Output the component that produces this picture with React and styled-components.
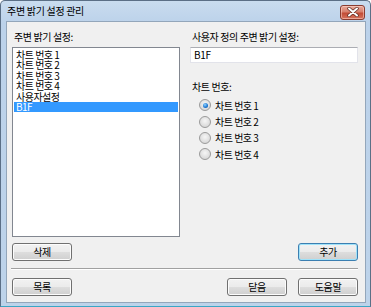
import React from "react";
import styled, { createGlobalStyle } from "styled-components";

const Global = createGlobalStyle`
  html, body { margin: 0; padding: 0; background: #ffffff; }
  body { font-family: "Noto Sans CJK KR", "Noto Sans", sans-serif; }
  * { box-sizing: border-box; }
`;

const Frame = styled.div`
  width: 371px;
  height: 307px;
  display: flex;
  flex-direction: column;
  border: 1px solid #5b6f86;
  border-bottom-color: #3aa6c5;
  border-radius: 5px 5px 0 0;
  background: linear-gradient(180deg, #c9dcef 0px, #bcd2ea 22px, #bdd3ea 100%);
`;

const TitleBar = styled.div`
  height: 20px;
  display: flex;
  align-items: center;
  justify-content: space-between;
  padding: 0 5px 0 6px;
  flex: none;
`;

const Title = styled.span`
  font-size: 10px;
  letter-spacing: -0.3px;
  color: #000;
  line-height: 12px;
`;

const CloseBtn = styled.div`
  width: 25px;
  height: 15px;
  margin-top: 2px;
  border: 1px solid #8a3c30;
  border-radius: 3px;
  background: linear-gradient(180deg, #e9a99a 0%, #d8806d 45%, #c24c36 55%, #d7735d 100%);
  box-shadow: inset 0 0 0 1px rgba(255, 220, 210, 0.5);
  display: flex;
  align-items: center;
  justify-content: center;
`;

const Client = styled.div`
  flex: 1;
  margin: 0 4px 3px 5px;
  border: 1px solid #93a6ba;
  background: #f0f0f0;
  padding: 9px 7px 6px 5px;
  display: flex;
  flex-direction: column;
`;

const Columns = styled.div`
  display: grid;
  grid-template-columns: 168px 168px;
  column-gap: 10px;
`;

const Column = styled.div`
  display: flex;
  flex-direction: column;
`;

const Label = styled.div`
  font-size: 10px;
  letter-spacing: -0.4px;
  line-height: 12px;
  height: 12px;
  color: #000;
  margin-left: 2px;
  margin-bottom: 4px;
  margin-top: ${(p) => p.$top || 0}px;
`;

const ListBox = styled.div`
  height: 190px;
  background: #fff;
  border: 1px solid #828790;
  padding: 2px 1px;
`;

const ListItem = styled.div`
  font-size: 10px;
  letter-spacing: -0.5px;
  line-height: 10.4px;
  height: 10.4px;
  padding-left: 2px;
  color: ${(p) => (p.$selected ? "#fff" : "#000")};
  background: ${(p) => (p.$selected ? "#3399ff" : "transparent")};
`;

const TextBox = styled.div`
  height: 16px;
  background: #fff;
  border: 1px solid #e2e3ea;
  border-top-color: #abadb3;
  font-size: 10px;
  letter-spacing: -0.3px;
  line-height: 14px;
  padding-left: 3px;
  color: #000;
`;

const RadioGroup = styled.div`
  display: flex;
  flex-direction: column;
  margin-left: 9px;
`;

const RadioRow = styled.div`
  display: flex;
  align-items: center;
  height: 16.4px;
  gap: 4px;
  font-size: 10px;
  letter-spacing: -0.5px;
  color: #000;
`;

const RadioCircle = styled.span`
  width: 12px;
  height: 12px;
  border-radius: 50%;
  border: 1px solid #9a9a9a;
  background: radial-gradient(circle at 50% 40%, #f6f6f6 0%, #e0e0e0 55%, #cfcfcf 100%);
  display: flex;
  align-items: center;
  justify-content: center;
  flex: none;
`;

const RadioDot = styled.span`
  width: 5px;
  height: 5px;
  border-radius: 50%;
  background: radial-gradient(circle at 40% 35%, #8fd3ff 0%, #1b74d0 60%, #0d4f9a 100%);
`;

const ButtonRow = styled.div`
  display: flex;
  justify-content: space-between;
  align-items: center;
  margin-top: ${(p) => p.$top || 0}px;
`;

const ButtonGroup = styled.div`
  display: flex;
  gap: 11px;
`;

const Button = styled.div`
  width: 60px;
  height: 18px;
  border: 1px solid ${(p) => (p.$default ? "#3c7fb1" : "#707070")};
  border-radius: 3px;
  background: linear-gradient(180deg, #f2f2f2 0%, #ebebeb 48%, #dddddd 52%, #cfcfcf 100%);
  box-shadow: inset 0 0 0 1px ${(p) => (p.$default ? "#9fe2f9" : "#fcfcfc")};
  display: flex;
  align-items: center;
  justify-content: center;
  font-size: 10px;
  letter-spacing: -0.4px;
  color: #000;
  line-height: 12px;
`;

const Separator = styled.div`
  height: 2px;
  margin: 7px 0 8px -1px;
  border-top: 1px solid #a0a0a0;
  border-bottom: 1px solid #ffffff;
`;

const items = ["차트 번호 1", "차트 번호 2", "차트 번호 3", "차트 번호 4", "사용자설정", "B1F"];
const radios = ["차트 번호 1", "차트 번호 2", "차트 번호 3", "차트 번호 4"];

export default function App() {
  return (
    <>
      <Global />
      <Frame>
        <TitleBar>
          <Title>주변 밝기 설정 관리</Title>
          <CloseBtn>
            <svg width="12" height="10" viewBox="0 0 12 10">
              <path d="M2 1.5 L10 8.5 M10 1.5 L2 8.5" stroke="#5a2a22" strokeWidth="3.4" strokeLinecap="round" />
              <path d="M2 1.5 L10 8.5 M10 1.5 L2 8.5" stroke="#ffffff" strokeWidth="2" strokeLinecap="round" />
            </svg>
          </CloseBtn>
        </TitleBar>
        <Client>
          <Columns>
            <Column>
              <Label>주변 밝기 설정:</Label>
              <ListBox>
                {items.map((t, i) => (
                  <ListItem key={t} $selected={i === items.length - 1}>
                    {t}
                  </ListItem>
                ))}
              </ListBox>
            </Column>
            <Column>
              <Label>사용자 정의 주변 밝기 설정:</Label>
              <TextBox>B1F</TextBox>
              <Label $top={18}>차트 번호:</Label>
              <RadioGroup>
                {radios.map((t, i) => (
                  <RadioRow key={t}>
                    <RadioCircle>{i === 0 && <RadioDot />}</RadioCircle>
                    {t}
                  </RadioRow>
                ))}
              </RadioGroup>
            </Column>
          </Columns>
          <ButtonRow $top={6}>
            <Button>삭제</Button>
            <Button $default>추가</Button>
          </ButtonRow>
          <Separator />
          <ButtonRow>
            <Button>목록</Button>
            <ButtonGroup>
              <Button>닫음</Button>
              <Button>도움말</Button>
            </ButtonGroup>
          </ButtonRow>
        </Client>
      </Frame>
    </>
  );
}
